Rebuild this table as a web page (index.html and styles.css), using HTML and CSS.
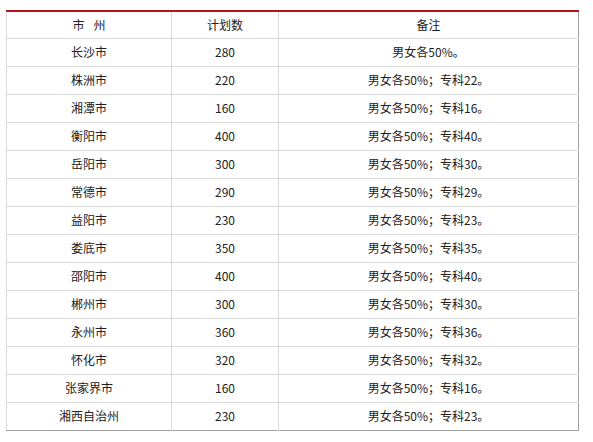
FILE: index.html
```html
<!DOCTYPE html>
<html lang="zh-CN">
<head>
<meta charset="utf-8">
<title>计划数</title>
<link rel="stylesheet" href="styles.css">
</head>
<body>
<table class="plan">
  <colgroup>
    <col class="c-city">
    <col class="c-num">
    <col class="c-note">
  </colgroup>
  <thead>
    <tr><th><span class="gap">市</span>州</th><th>计划数</th><th>备注</th></tr>
  </thead>
  <tbody>
    <tr><td>长沙市</td><td>280</td><td>男女各50%。</td></tr>
    <tr><td>株洲市</td><td>220</td><td>男女各50%；专科22。</td></tr>
    <tr><td>湘潭市</td><td>160</td><td>男女各50%；专科16。</td></tr>
    <tr><td>衡阳市</td><td>400</td><td>男女各50%；专科40。</td></tr>
    <tr><td>岳阳市</td><td>300</td><td>男女各50%；专科30。</td></tr>
    <tr><td>常德市</td><td>290</td><td>男女各50%；专科29。</td></tr>
    <tr><td>益阳市</td><td>230</td><td>男女各50%；专科23。</td></tr>
    <tr><td>娄底市</td><td>350</td><td>男女各50%；专科35。</td></tr>
    <tr><td>邵阳市</td><td>400</td><td>男女各50%；专科40。</td></tr>
    <tr><td>郴州市</td><td>300</td><td>男女各50%；专科30。</td></tr>
    <tr><td>永州市</td><td>360</td><td>男女各50%；专科36。</td></tr>
    <tr><td>怀化市</td><td>320</td><td>男女各50%；专科32。</td></tr>
    <tr><td>张家界市</td><td>160</td><td>男女各50%；专科16。</td></tr>
    <tr><td>湘西自治州</td><td>230</td><td>男女各50%；专科23。</td></tr>
  </tbody>
</table>
</body>
</html>
```
FILE: styles.css
```css
html, body {
  margin: 0;
  padding: 0;
  background: #fff;
}
body {
  padding: 10px 0 0 6px;
  font-family: "Noto Sans CJK SC", "Liberation Sans", sans-serif;
  font-size: 12px;
  color: #222;
}
.plan {
  border-collapse: collapse;
  table-layout: fixed;
  width: 572px;
  border-top: 2px solid #b5121b;
  border-left: 1px solid #d9d9d9;
  border-right: 1px solid #a0a0a0;
  border-bottom: 1px solid #a0a0a0;
}
.c-city { width: 165px; }
.c-num { width: 107px; }
.c-note { width: 300px; }
.plan th,
.plan td {
  height: 27px;
  padding: 0;
  text-align: center;
  vertical-align: middle;
  font-weight: normal;
  line-height: 14px;
  border-top: 1px solid #d9d9d9;
  border-left: 1px solid #d9d9d9;
  box-sizing: border-box;
}
.plan th {
  border-top: none;
  height: 27px;
}
.plan tbody td {
  height: 28px;
}
.plan tr > :first-child {
  border-left: none;
}
.gap {
  margin-right: 9px;
}
```
